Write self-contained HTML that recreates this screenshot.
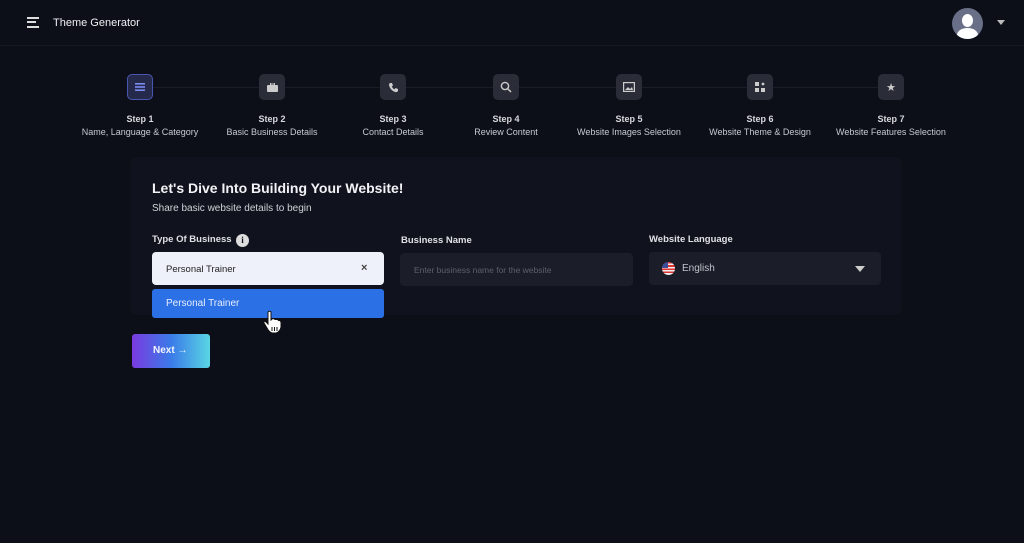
<!DOCTYPE html>
<html><head><style>
*{margin:0;padding:0;box-sizing:border-box}
body{width:1024px;height:543px;background:#0c0e18;font-family:"Liberation Sans",sans-serif;color:#e8e9ee;position:relative;overflow:hidden}
.hdr{position:absolute;left:0;top:0;width:1024px;height:46px;border-bottom:1px solid #161926}
.abs{position:absolute}
.step{position:absolute;top:74px;width:160px;margin-left:-80px;text-align:center}
.ib{width:26px;height:26px;border-radius:5px;background:#2a2d38;margin:0 auto;display:flex;align-items:center;justify-content:center}
.st{font-size:9px;font-weight:bold;color:#d8d9de;margin-top:14px}
.sd{font-size:9px;color:#c8cad2;margin-top:3px}
.card{position:absolute;left:131px;top:157px;width:770px;height:158px;background:#10131d;border-radius:6px}
.lbl{position:absolute;font-size:9.5px;font-weight:bold;color:#e0e1e6}
.inp{position:absolute;height:33px;border-radius:4px;background:#1b1e29}
</style></head><body>
<div class="hdr">
 <div class="abs" style="left:27px;top:17px;width:12px;height:2px;background:#ddd"></div>
 <div class="abs" style="left:27px;top:21px;width:9px;height:2px;background:#ddd"></div>
 <div class="abs" style="left:27px;top:26px;width:12px;height:2px;background:#ddd"></div>
 <div class="abs" style="left:53px;top:17px;font-size:11px;color:#f0f0f4">Theme Generator</div>
 <div class="abs" style="left:952px;top:8px;width:31px;height:31px;border-radius:50%;background:#6a6f88;overflow:hidden">
  <div class="abs" style="left:10px;top:6px;width:11px;height:13px;border-radius:50%;background:#fff"></div>
  <div class="abs" style="left:5px;top:20px;width:21px;height:14px;border-radius:50% 50% 0 0;background:#fff"></div>
 </div>
 <div class="abs" style="left:997px;top:20px;width:0;height:0;border-left:4px solid transparent;border-right:4px solid transparent;border-top:5px solid #bbb"></div>
</div>
<div class="abs" style="left:140px;top:87px;width:751px;height:1px;background:#1a1d28"></div>
<div class="step" style="left:140px"><div class="ib" style="background:#252a4a;border:1px solid #4a55b0"><svg width="10" height="8"><rect y="0" width="10" height="1.6" fill="#7b8cf5"/><rect y="3.2" width="10" height="1.6" fill="#7b8cf5"/><rect y="6.4" width="10" height="1.6" fill="#7b8cf5"/></svg></div><div class="st">Step 1</div><div class="sd">Name, Language &amp; Category</div></div>
<div class="step" style="left:272px"><div class="ib"><svg width="11" height="9"><rect x="3.5" y="0" width="4" height="2" fill="none" stroke="#ccc" stroke-width="1"/><rect y="2" width="11" height="7" rx="1" fill="#ccc"/></svg></div><div class="st">Step 2</div><div class="sd">Basic Business Details</div></div>
<div class="step" style="left:393px"><div class="ib"><svg width="11" height="11" viewBox="0 0 11 11"><path d="M2 1 L4 1 L5 3.5 L3.8 4.5 Q5 7 6.5 7.2 L7.5 6 L10 7 L10 9 Q9 10.5 7 10 Q2 8 1 3 Q1 1.5 2 1Z" fill="#ccc"/></svg></div><div class="st">Step 3</div><div class="sd">Contact Details</div></div>
<div class="step" style="left:506px"><div class="ib"><svg width="12" height="12"><circle cx="5" cy="5" r="3.6" fill="none" stroke="#ccc" stroke-width="1.4"/><line x1="7.6" y1="7.6" x2="11" y2="11" stroke="#ccc" stroke-width="1.5"/></svg></div><div class="st">Step 4</div><div class="sd">Review Content</div></div>
<div class="step" style="left:629px"><div class="ib"><svg width="12" height="10"><rect x=".6" y=".6" width="10.8" height="8.8" fill="none" stroke="#ccc" stroke-width="1.2"/><path d="M2 8 L5 5 L7 7 L9 5 L10 8Z" fill="#ccc"/></svg></div><div class="st">Step 5</div><div class="sd">Website Images Selection</div></div>
<div class="step" style="left:760px"><div class="ib"><svg width="10" height="10"><rect width="4" height="4" fill="#ccc"/><circle cx="8" cy="2" r="1.4" fill="#ccc"/><rect y="6" width="4" height="4" fill="#ccc"/><rect x="6" y="6" width="4" height="4" fill="#ccc"/></svg></div><div class="st">Step 6</div><div class="sd">Website Theme &amp; Design</div></div>
<div class="step" style="left:891px"><div class="ib"><span style="font-size:11px;color:#ccc">★</span></div><div class="st">Step 7</div><div class="sd">Website Features Selection</div></div>

<div class="card"></div>
<div class="abs" style="left:152px;top:180px;font-size:14px;font-weight:bold;color:#f2f3f6">Let's Dive Into Building Your Website!</div>
<div class="abs" style="left:152px;top:203px;font-size:10px;color:#d0d2d8">Share basic website details to begin</div>
<div class="lbl" style="left:152px;top:234px">Type Of Business</div>
<div class="abs" style="left:236px;top:234px;width:13px;height:13px;border-radius:50%;background:#ddd;color:#10131d;font-size:9px;font-weight:bold;text-align:center;line-height:13px;font-family:'Liberation Serif',serif">i</div>
<div class="lbl" style="left:401px;top:235px">Business Name</div>
<div class="lbl" style="left:649px;top:234px">Website Language</div>
<div class="abs" style="left:152px;top:252px;width:232px;height:33px;border-radius:4px;background:#eef0fa"></div>
<div class="abs" style="left:166px;top:264px;font-size:9.5px;color:#222">Personal Trainer</div>
<div class="abs" style="left:361px;top:262px;font-size:11px;color:#444;font-weight:bold">×</div>
<div class="abs" style="left:152px;top:289px;width:232px;height:29px;border-radius:3px;background:#2b70e4"></div>
<div class="abs" style="left:166px;top:298px;font-size:10px;color:#e8efff">Personal Trainer</div>
<div class="inp" style="left:400px;top:253px;width:233px"></div>
<div class="abs" style="left:414px;top:265px;font-size:8.5px;color:#5c606c">Enter business name for the website</div>
<div class="inp" style="left:649px;top:252px;width:232px"></div>
<div class="abs" style="left:662px;top:262px;width:13px;height:13px;border-radius:50%;background:repeating-linear-gradient(#d33 0 1.6px,#eee 1.6px 3.2px);overflow:hidden"><div style="width:6px;height:6px;background:#3a4b9a"></div></div>
<div class="abs" style="left:682px;top:263px;font-size:10px;color:#bfc2ca">English</div>
<div class="abs" style="left:855px;top:266px;width:0;height:0;border-left:5px solid transparent;border-right:5px solid transparent;border-top:6px solid #ccc"></div>
<svg class="abs" style="left:262px;top:310px" width="22" height="24" viewBox="0 0 22 24"><path d="M6 2 Q7.5 0.5 9 2 L9 10 L10 9 Q11.5 8 13 9.5 L14 9.5 Q15.5 9 16.5 10.5 Q18 10 19 12 L19 17 Q18 22 14 23 L10 23 Q7 22 5 18 L2 13 Q1.5 11 3.5 11.5 L6 14Z" fill="#fff" stroke="#111" stroke-width="1"/><path d="M10 17v4M12.5 17v4M15 17v4" stroke="#111" stroke-width="1"/></svg>
<div class="abs" style="left:132px;top:334px;width:78px;height:34px;border-radius:3px;background:linear-gradient(90deg,#7a3be0,#3a7be8 50%,#5ad6e4)"></div>
<div class="abs" style="left:153px;top:345px;font-size:10px;font-weight:bold;color:#f4f6ff">Next →</div>
</body></html>
